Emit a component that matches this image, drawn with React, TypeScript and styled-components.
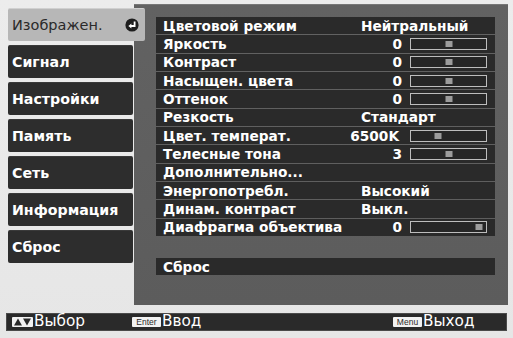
import React from "react";
import styled, { createGlobalStyle } from "styled-components";

const GlobalStyle = createGlobalStyle`
  html, body { margin: 0; padding: 0; background: #e9e9e9; }
  * { box-sizing: border-box; }
`;

const Screen = styled.div`
  width: 513px;
  height: 338px;
  display: flex;
  flex-direction: column;
  background: linear-gradient(180deg, #ececec 0%, #e6e6e6 100%);
  font-family: "DejaVu Sans", "Liberation Sans", sans-serif;
  overflow: hidden;
`;

const Main = styled.div`
  display: flex;
  height: 305px;
`;

const Sidebar = styled.div`
  width: 134px;
  flex-shrink: 0;
  padding: 8px 0 0 8px;
  display: flex;
  flex-direction: column;
  gap: 4px;
`;

const Tab = styled.div<{ $active?: boolean }>`
  position: relative;
  z-index: ${(p) => (p.$active ? 2 : 1)};
  width: ${(p) => (p.$active ? "137px" : "125px")};
  height: 33px;
  display: flex;
  align-items: center;
  justify-content: space-between;
  padding: 0 6px 0 4px;
  border-radius: 2px;
  background: ${(p) => (p.$active ? "#b7b7b7" : "#2d2d2d")};
  border-top: 1px solid ${(p) => (p.$active ? "#d0d0d0" : "#3a3a3a")};
  color: ${(p) => (p.$active ? "#2a2a2a" : "#ffffff")};
  font-size: ${(p) => (p.$active ? "14.5px" : "14.2px")};
  font-weight: ${(p) => (p.$active ? 400 : 700)};
  white-space: nowrap;
`;

const Panel = styled.div`
  margin-top: 4px;
  width: 374px;
  height: 301px;
  flex-shrink: 0;
  background: linear-gradient(180deg, #626262 0%, #5c5c5c 100%);
  border-top: 1px solid #777;
  padding: 12px 13px 0 22px;
  display: flex;
  flex-direction: column;
`;

const RowList = styled.div`
  display: flex;
  flex-direction: column;
  gap: 1px;
`;

const Row = styled.div<{ $gapBefore?: boolean }>`
  height: 17.33px;
  display: flex;
  align-items: center;
  padding-left: 7px;
  background: #2a2a2a;
  color: #ffffff;
  font-size: 13.7px;
  font-weight: 700;
  white-space: nowrap;
  margin-top: ${(p) => (p.$gapBefore ? "21px" : "0")};
`;

const Label = styled.span`
  width: 198px;
  flex-shrink: 0;
`;

const Num = styled.span<{ $wide?: boolean }>`
  width: 41px;
  display: flex;
  justify-content: flex-end;
  padding-right: ${(p) => (p.$wide ? "3px" : "0")};
  margin-right: 8px;
`;

const Track = styled.div`
  position: relative;
  width: 77px;
  height: 12px;
  border: 1px solid #bdbdbd;
  background: #262626;
`;

const Thumb = styled.div`
  position: absolute;
  top: 50%;
  width: 7px;
  height: 6px;
  background: #9c9c9c;
  transform: translate(-50%, -50%);
`;

const Footer = styled.div`
  margin: 8px 6px 0 6px;
  height: 18px;
  background: #2a2a2a;
  border: 1px solid #4a4a4a;
  display: grid;
  grid-template-columns: 120px 261px auto;
  align-items: center;
  padding-left: 5px;
  color: #fff;
  font-size: 15.3px;
`;

const FootItem = styled.div`
  display: flex;
  align-items: center;
  gap: 1px;
  line-height: 1;
`;

const KeyBox = styled.span<{ $w: number }>`
  display: inline-flex;
  align-items: center;
  justify-content: center;
  width: ${(p) => p.$w}px;
  height: 10px;
  background: #f2f2f2;
  color: #2a2a2a;
  font-family: "Liberation Sans", sans-serif;
  font-size: 8.5px;
  border-radius: 1px;
`;

const EnterIcon = () => (
  <svg width="14" height="14" viewBox="0 0 14 14">
    <circle cx="7" cy="7" r="6.6" fill="#1e1e1e" />
    <path d="M9.6 3.6 V8 H6" stroke="#fff" strokeWidth="1.8" fill="none" />
    <path d="M3.4 8 L6.4 5.4 L6.4 10.6 Z" fill="#fff" />
  </svg>
);

const ArrowsIcon = () => (
  <svg width="19" height="8" viewBox="0 0 19 8">
    <path d="M1 7.5 L5 0.5 L9 7.5 Z" fill="#2a2a2a" />
    <path d="M10 0.5 L18 0.5 L14 7.5 Z" fill="#2a2a2a" />
  </svg>
);

type Item = { label: string; text?: string; num?: string; pos?: number };

const items: Item[] = [
  { label: "Цветовой режим", text: "Нейтральный" },
  { label: "Яркость", num: "0", pos: 50 },
  { label: "Контраст", num: "0", pos: 50 },
  { label: "Насыщен. цвета", num: "0", pos: 50 },
  { label: "Оттенок", num: "0", pos: 50 },
  { label: "Резкость", text: "Стандарт" },
  { label: "Цвет. температ.", num: "6500K", pos: 36 },
  { label: "Телесные тона", num: "3", pos: 50 },
  { label: "Дополнительно..." },
  { label: "Энергопотребл.", text: "Высокий" },
  { label: "Динам. контраст", text: "Выкл." },
  { label: "Диафрагма объектива", num: "0", pos: 91 },
];

const tabs = ["Изображен.", "Сигнал", "Настройки", "Память", "Сеть", "Информация", "Сброс"];

export default function App() {
  return (
    <>
      <GlobalStyle />
      <Screen>
        <Main>
          <Sidebar>
            {tabs.map((t, i) => (
              <Tab key={t} $active={i === 0}>
                <span>{t}</span>
                {i === 0 && <EnterIcon />}
              </Tab>
            ))}
          </Sidebar>
          <Panel>
            <RowList>
              {items.map((it) => (
                <Row key={it.label}>
                  <Label>{it.label}</Label>
                  {it.text && <span>{it.text}</span>}
                  {it.num !== undefined && (
                    <>
                      <Num $wide={it.num.length > 1}>
                        <span>{it.num}</span>
                      </Num>
                      <Track>
                        <Thumb style={{ left: `${it.pos}%` }} />
                      </Track>
                    </>
                  )}
                </Row>
              ))}
              <Row $gapBefore>
                <Label>Сброс</Label>
              </Row>
            </RowList>
          </Panel>
        </Main>
        <Footer>
          <FootItem>
            <KeyBox $w={21}>
              <ArrowsIcon />
            </KeyBox>
            <span>Выбор</span>
          </FootItem>
          <FootItem>
            <KeyBox $w={29}>Enter</KeyBox>
            <span>Ввод</span>
          </FootItem>
          <FootItem>
            <KeyBox $w={29}>Menu</KeyBox>
            <span>Выход</span>
          </FootItem>
        </Footer>
      </Screen>
    </>
  );
}
